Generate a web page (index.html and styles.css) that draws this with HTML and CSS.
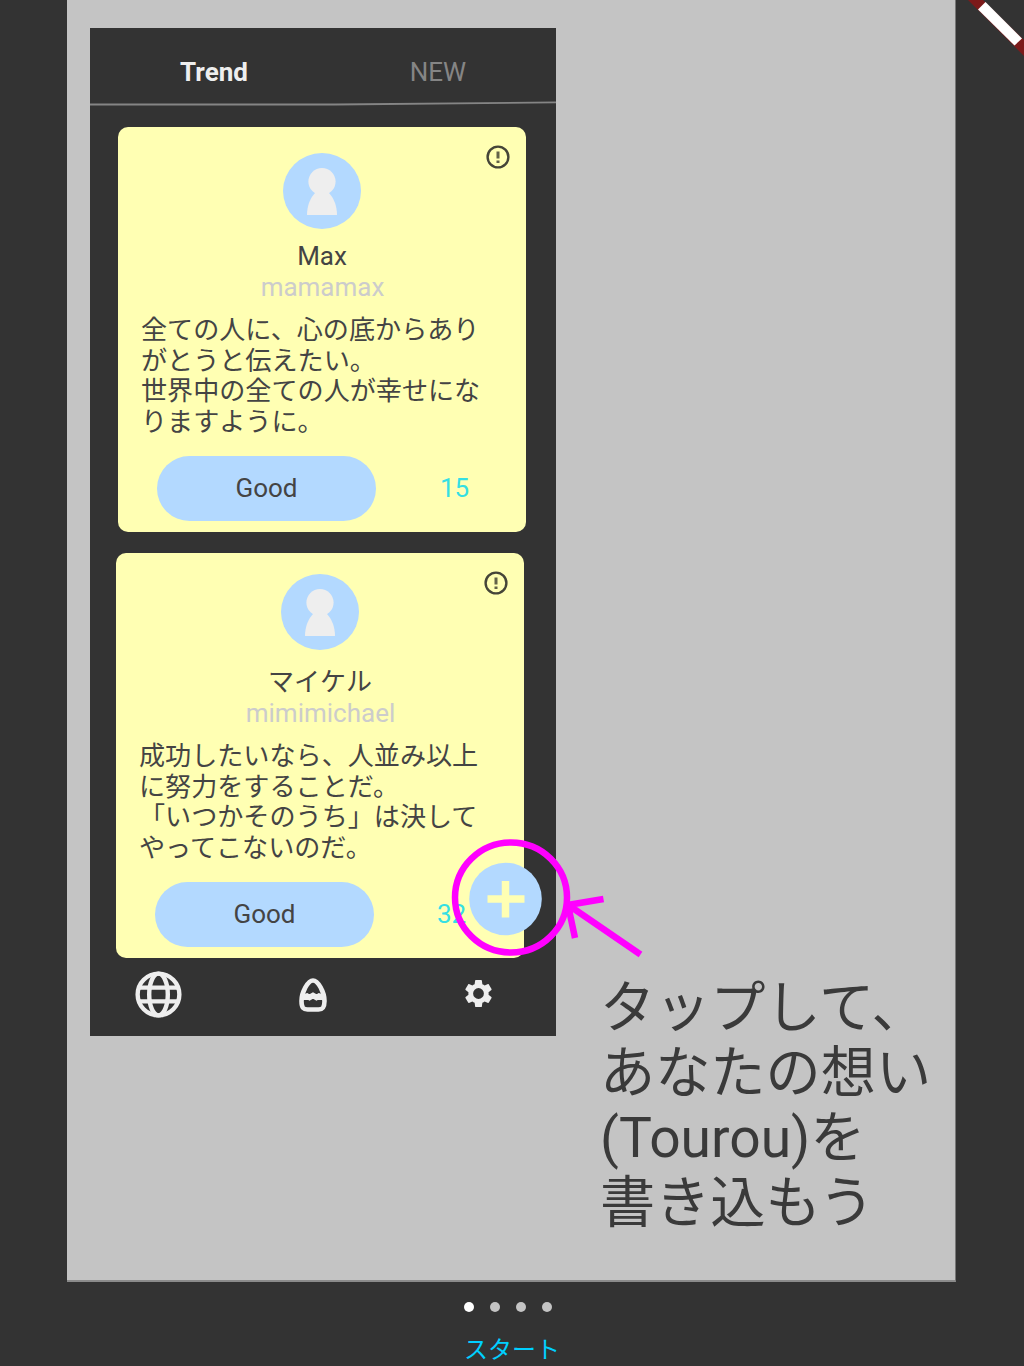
FILE: index.html
```html
<!DOCTYPE html>
<html lang="ja">
<head>
<meta charset="utf-8">
<title>Tourou</title>
<link rel="stylesheet" href="styles.css">
</head>
<body>
<svg class="defs" width="0" height="0" aria-hidden="true">
  <symbol id="avatar" viewBox="0 0 78 76">
    <ellipse cx="39" cy="38" rx="39" ry="38" fill="#b3d9ff"/>
    <circle cx="39" cy="28.5" r="13.6" fill="#eee"/>
    <path d="M32.500 39.500H45.500C51 45 54 53 54 62H24C24 53 27 45 32.500 39.500Z" fill="#eee"/>
  </symbol>
  <symbol id="alert" viewBox="0 0 24 24">
    <circle cx="12" cy="12" r="10.400" fill="none" stroke="#454538" stroke-width="2.400"/>
    <path d="M12 6.500V13.500M12 15.500V18" fill="none" stroke="#626248" stroke-width="3"/>
  </symbol>
</svg>
<main class="screen">
  <section class="slide">
    <div class="phone">
      <nav class="tabs">
        <span class="tab active">Trend</span>
        <span class="tab">NEW</span>
        <svg class="rule" viewBox="0 0 466 5"><path d="M0 3.500H245L466 1.400" fill="none" stroke="#858585" stroke-width="1.900"/></svg>
      </nav>
      <article class="card first">
        <svg class="alert"><use href="#alert"/></svg>
        <svg class="avatar"><use href="#avatar"/></svg>
        <h2 class="name">Max</h2>
        <p class="handle">mamamax</p>
        <p class="message">全ての人に、心の底からあり<br>がとうと伝えたい。<br>世界中の全ての人が幸せにな<br>りますように。</p>
        <div class="actions"><span class="good">Good</span><span class="count">15</span></div>
      </article>
      <article class="card second">
        <svg class="alert"><use href="#alert"/></svg>
        <svg class="avatar"><use href="#avatar"/></svg>
        <h2 class="name">マイケル</h2>
        <p class="handle">mimimichael</p>
        <p class="message">成功したいなら、人並み以上<br>に努力をすることだ。<br>「いつかそのうち」は決して<br>やってこないのだ。</p>
        <div class="actions"><span class="good">Good</span><span class="count">32</span></div>
      </article>
      <footer class="bottom">
        <svg class="globe" viewBox="0 0 48 48" fill="none" stroke="#eee" stroke-width="4.500"><circle cx="24" cy="24" r="21.300"/><ellipse cx="24" cy="24" rx="9.500" ry="21.300"/><path d="M4 17H44M4 31H44"/></svg>
        <svg class="lantern" viewBox="0 0 28 34" fill="none" stroke="#eee" stroke-width="4.600"><path d="M14 2.500C19 2.500 25.500 14 25.500 23C25.500 30 23.500 31.500 19.500 31.500H8.500C4.500 31.500 2.500 30 2.500 23C2.500 14 9 2.500 14 2.500Z"/><path d="M3 19.500L8 18L10.500 19.500L14 17.500L17.500 19.500L20 18L25 19.500" stroke-width="5.500"/></svg>
        <svg class="gear" viewBox="2 2 20 20"><path fill="#eee" fill-rule="evenodd" d="M19.430 12.980c.04-.32.07-.64.07-.98s-.03-.66-.07-.98l2.110-1.650c.19-.15.24-.42.12-.64l-2-3.460c-.12-.22-.39-.3-.61-.22l-2.490 1c-.52-.4-1.080-.73-1.690-.98l-.38-2.650C14.460 2.180 14.250 2 14 2h-4c-.25 0-.46.18-.49.42l-.38 2.650c-.61.25-1.170.59-1.690.98l-2.490-1c-.23-.09-.49 0-.61.22l-2 3.460c-.13.22-.07.49.12.64l2.110 1.650c-.04.32-.07.65-.07.98s.03.66.07.98l-2.110 1.650c-.19.15-.24.42-.12.64l2 3.460c.12.22.39.3.61.22l2.490-1c.52.4 1.080.73 1.690.98l.38 2.650c.03.24.24.42.49.42h4c.25 0 .46-.18.49-.42l.38-2.650c.61-.25 1.170-.59 1.690-.98l2.490 1c.23.09.49 0 .61-.22l2-3.460c.12-.22.07-.49-.12-.64l-2.110-1.650ZM12 16a4 4 0 1 1 0-8a4 4 0 0 1 0 8Z"/></svg>
      </footer>
    </div>
    <p class="caption">タップして、<br>あなたの想い<br>(Tourou)を<br>書き込もう</p>
    <svg class="pointer" viewBox="0 0 200 130">
      <circle cx="55.500" cy="69" r="36.300" fill="#b3d9ff"/>
      <path d="M55.500 51V87.500M37.500 69H74.500" stroke="#ffffb3" stroke-width="7.500"/>
      <ellipse cx="61" cy="67.500" rx="56" ry="55" fill="none" stroke="#f0f" stroke-width="6.500"/>
      <path d="M190.500 124.500L119 75.500M153.500 69L118 75L125 108" fill="none" stroke="#f0f" stroke-width="6.500"/>
    </svg>
  </section>
  <div class="dots"><i class="dot on"></i><i class="dot"></i><i class="dot"></i><i class="dot"></i></div>
  <a class="start">スタート</a>
  <svg class="ribbon" viewBox="0 0 60 60"><path d="M4 0H19L60 40V56Z" fill="#7b1a1a"/><path d="M21.500 2L58 38.500L50.500 45.500L14 9.500Z" fill="#fff"/></svg>
</main>
</body>
</html>
```
FILE: styles.css
```css
* { box-sizing: border-box; }
body { margin: 0; background: #333; font-family: Roboto, "Noto Sans CJK JP", sans-serif; color: #444; }
h2, p { margin: 0; font-size: inherit; font-weight: 400; white-space: nowrap; }
svg { display: block; }
.defs { position: absolute; }
.screen { position: relative; width: 1024px; height: 1366px; overflow: hidden; display: flex; flex-direction: column; }
.slide { position: relative; flex: none; width: 889px; height: 1282px; margin-left: 67px; padding: 28px 0 0 23px; background: #c4c4c4; border-right: 1px solid #777; border-bottom: 2px solid #8b8b8b; display: flex; align-items: flex-start; }
.phone { flex: none; width: 466px; height: 1008px; background: #333; display: flex; flex-direction: column; }
.tabs { height: 78px; display: grid; grid-template-columns: 248px 200px; grid-template-rows: 73px 5px; font-size: 26px; line-height: 30px; color: #858585; }
.tab { text-align: center; padding-top: 29px; }
.tab.active { color: #eee; font-weight: 700; }
.rule { grid-column: 1 / 3; width: 466px; height: 5px; }
.card { position: relative; flex: none; width: 408px; height: 405px; border-radius: 10px; background: #ffffb3; display: flex; flex-direction: column; align-items: center; font-size: 26px; line-height: 30.600px; }
.first { margin: 21px 0 0 28px; padding-top: 26px; }
.second { margin: 21px 0 0 26px; padding-top: 21px; }
.alert { position: absolute; top: 18px; right: 16px; width: 24px; height: 24px; }
.avatar { flex: none; width: 78px; height: 76px; }
.name { margin-top: 12px; height: 31px; }
.second .name { margin-top: 17px; }
.handle { height: 31px; padding-left: 1px; color: #ccc; }
.message { align-self: flex-start; margin: 12px 0 0 23px; height: 122px; font-size: 26.100px; }
.actions { align-self: flex-start; margin: 19px 0 0 39px; display: flex; align-items: center; }
.good { width: 219px; height: 65px; border-radius: 33px; background: #b3d9ff; line-height: 65px; text-align: center; }
.count { margin-left: 64px; color: #35dfe3; }
.second .count { margin-left: 63px; }
.bottom { height: 78px; padding: 0 64px 0 45px; display: flex; align-items: flex-start; }
.globe { width: 47px; height: 47px; margin-top: 13px; }
.lantern { width: 28px; height: 34px; margin: 20px 0 0 117px; }
.gear { width: 27px; height: 27px; margin: 22px 0 0 138px; }
.caption { margin: 948px 0 0 44px; font-size: 55.200px; line-height: 65px; color: #3a3a3a; }
.pointer { position: absolute; left: 383px; top: 830px; width: 200px; height: 130px; }
.dots { flex: none; height: 51px; padding: 20px 0 0 397px; margin-left: 67px; display: flex; gap: 16px; }
.dot { width: 10px; height: 10px; border-radius: 50%; background: #c4c4c4; }
.dot.on { background: #fff; }
.start { flex: none; align-self: center; font-size: 24px; line-height: 34px; color: #00cfff; }
.ribbon { position: absolute; right: 0; top: 0; width: 60px; height: 60px; }
```
